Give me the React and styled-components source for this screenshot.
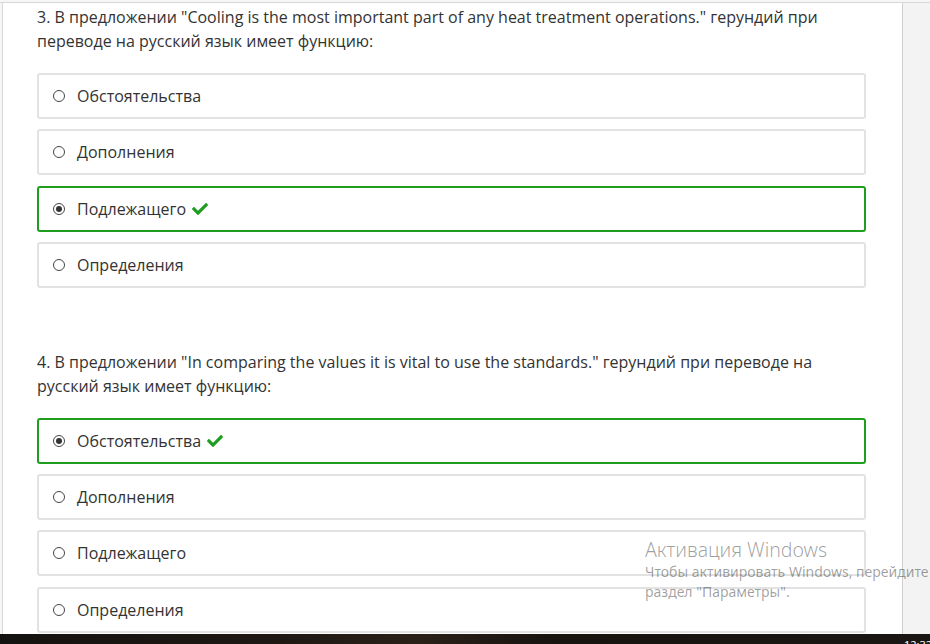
import React from 'react';
import styled, { createGlobalStyle } from 'styled-components';
import { FaCheck } from 'react-icons/fa';

const GlobalStyle = createGlobalStyle`
  html, body {
    margin: 0;
    padding: 0;
    background: #fff;
  }
  body {
    font-family: 'Open Sans', 'Noto Sans', sans-serif;
  }
`;

const Screen = styled.div`
  width: 930px;
  height: 644px;
  overflow: hidden;
  display: flex;
  flex-direction: column;
  position: relative;
`;

const TopStrip = styled.div`
  height: 2px;
  background: #f6f6f6;
  border-bottom: 1px solid #d8d8d8;
  flex-shrink: 0;
`;

const Body = styled.div`
  flex: 1;
  display: flex;
  overflow: hidden;
`;

const Gutter = styled.div`
  width: 2px;
  background: #f6f6f6;
  border-right: 1px solid #d8d8d8;
  flex-shrink: 0;
`;

const Main = styled.div`
  width: 829px;
  padding: 2px 36px 0 34px;
  background: #fff;
  flex-shrink: 0;
`;

const Sidebar = styled.div`
  flex: 1;
  background: #f3f3f3;
  border-left: 1px solid #cfcfcf;
`;

const Question = styled.div`
  margin-bottom: ${p => p.gap || 0}px;
`;

const Prompt = styled.p`
  margin: 0 0 20px;
  font-size: 16px;
  line-height: 24px;
  color: #333;
`;

const Options = styled.div`
  display: flex;
  flex-direction: column;
  gap: 10.3px;
`;

const Option = styled.div`
  box-sizing: border-box;
  height: 46px;
  display: flex;
  align-items: center;
  padding-left: 14px;
  border: 2px solid ${p => (p.correct ? '#1f9d1f' : '#e2e2e2')};
  border-radius: 3px;
  font-size: 16px;
  color: #333;
`;

const Radio = styled.span`
  box-sizing: border-box;
  width: 12px;
  height: 12px;
  border-radius: 50%;
  border: 1.5px solid #444;
  margin-right: 12px;
  display: flex;
  align-items: center;
  justify-content: center;
  &::after {
    content: '';
    width: 6px;
    height: 6px;
    border-radius: 50%;
    background: #333;
    display: ${p => (p.checked ? 'block' : 'none')};
  }
`;

const Check = styled(FaCheck)`
  color: #1f9d1f;
  font-size: 16px;
  margin-left: 6px;
`;

const Taskbar = styled.div`
  height: 10px;
  flex-shrink: 0;
  background: linear-gradient(90deg, #141210 0%, #1e1813 30%, #2a2018 45%, #17130f 60%, #1a1613 100%);
  display: flex;
  justify-content: flex-end;
  overflow: hidden;
`;

const Clock = styled.span`
  color: #fff;
  font-family: 'Noto Sans', sans-serif;
  font-size: 11px;
  line-height: 1;
  padding-top: 5px;
  margin-right: -2px;
`;

const Watermark = styled.div`
  position: absolute;
  left: 645px;
  top: 538px;
  color: rgba(0, 0, 0, 0.38);
  font-family: 'Noto Sans', sans-serif;
  white-space: nowrap;
  pointer-events: none;
`;

const WatermarkTitle = styled.div`
  font-size: 19.5px;
  line-height: 24px;
  font-weight: 300;
`;

const WatermarkText = styled.div`
  font-size: 14px;
  line-height: 20px;
`;

const questions = [
  {
    text: '3. В предложении "Cooling is the most important part of any heat treatment operations." герундий при переводе на русский язык имеет функцию:',
    answer: 2,
    gap: 62,
  },
  {
    text: '4. В предложении "In comparing the values it is vital to use the standards." герундий при переводе на русский язык имеет функцию:',
    answer: 0,
    gap: 0,
  },
];

const choices = ['Обстоятельства', 'Дополнения', 'Подлежащего', 'Определения'];

export default function App() {
  return (
    <>
      <GlobalStyle />
      <Screen>
        <TopStrip />
        <Body>
          <Gutter />
          <Main>
            {questions.map(q => (
              <Question key={q.text} gap={q.gap}>
                <Prompt>{q.text}</Prompt>
                <Options>
                  {choices.map((c, i) => (
                    <Option key={c} correct={i === q.answer}>
                      <Radio checked={i === q.answer} />
                      {c}
                      {i === q.answer && <Check />}
                    </Option>
                  ))}
                </Options>
              </Question>
            ))}
          </Main>
          <Sidebar />
        </Body>
        <Taskbar>
          <Clock>12:32</Clock>
        </Taskbar>
        <Watermark>
          <WatermarkTitle>Активация Windows</WatermarkTitle>
          <WatermarkText>Чтобы активировать Windows, перейдите в</WatermarkText>
          <WatermarkText>раздел "Параметры".</WatermarkText>
        </Watermark>
      </Screen>
    </>
  );
}
